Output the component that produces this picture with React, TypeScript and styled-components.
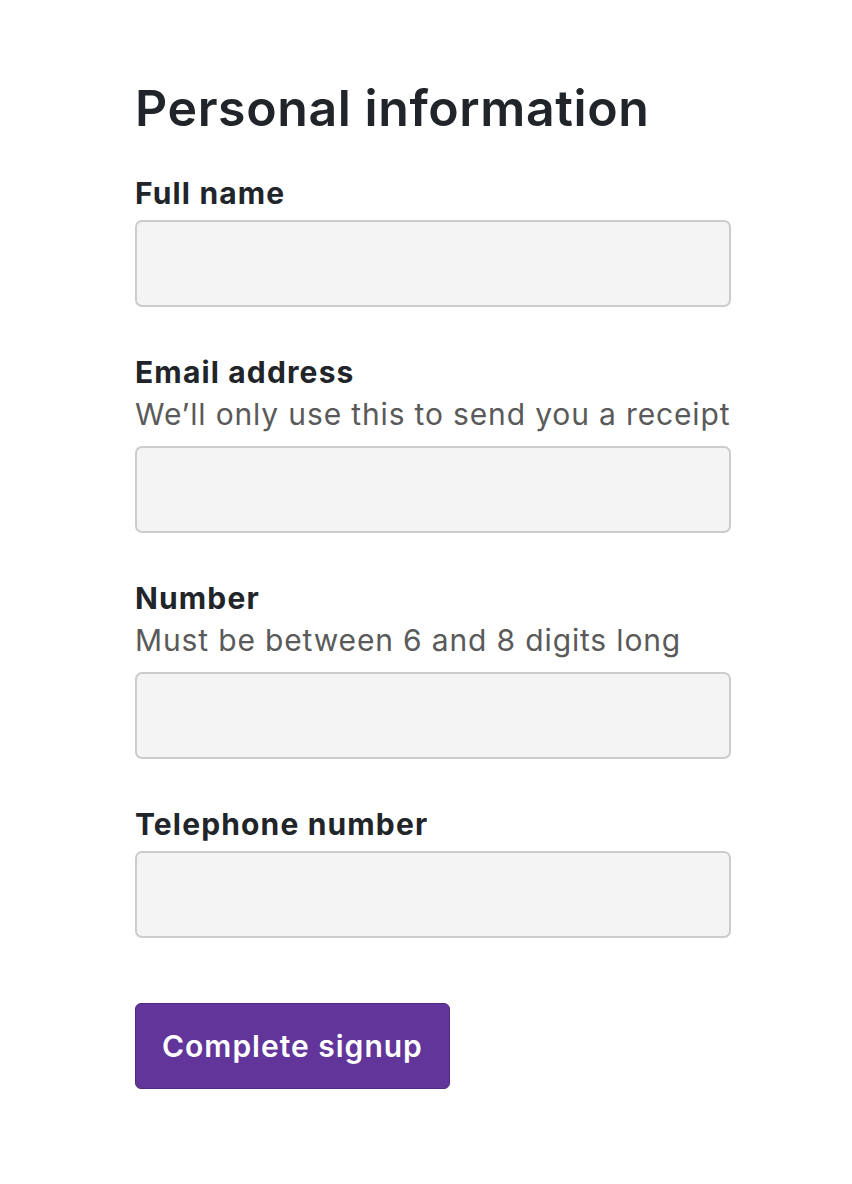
import styled, { createGlobalStyle } from "styled-components";

const GlobalStyle = createGlobalStyle`
  body {
    margin: 0;
    background: #ffffff;
    font-family: Inter, "Noto Sans", "Liberation Sans", sans-serif;
    color: #212529;
  }
`;

const Page = styled.main`
  padding: 78px 0 80px 135px;
`;

const Form = styled.form`
  width: 596px;
  display: flex;
  flex-direction: column;
`;

const Heading = styled.h1`
  margin: 0 0 34px;
  font-size: 50px;
  line-height: 60px;
  font-weight: 600;
  letter-spacing: 0.6px;
  color: #212529;
`;

const Field = styled.div`
  display: flex;
  flex-direction: column;
  & + & {
    margin-top: 44px;
  }
`;

const Label = styled.label`
  font-size: 30px;
  line-height: 42px;
  font-weight: 700;
  letter-spacing: 1.15px;
  color: #212529;
`;

const Hint = styled.div`
  font-size: 30px;
  line-height: 42px;
  font-weight: 400;
  letter-spacing: 0.85px;
  color: #5a5a5a;
  margin-bottom: 5px;
`;

const Input = styled.input`
  box-sizing: border-box;
  margin-top: 6px;
  width: 100%;
  height: 87px;
  background: #f4f4f4;
  border: 2px solid #cccccc;
  border-radius: 7px;
  padding: 0 20px;
  font: inherit;
  font-size: 30px;
  outline: none;
`;

const Button = styled.button`
  margin-top: 65px;
  align-self: flex-start;
  box-sizing: border-box;
  height: 86px;
  padding: 0 26px;
  background: #62359a;
  border: 1px solid #4f2a80;
  border-radius: 6px;
  color: #ffffff;
  font-family: inherit;
  font-size: 30px;
  font-weight: 600;
  letter-spacing: 1px;
  cursor: pointer;
`;

type FieldProps = { id: string; label: string; hint?: string; type?: string };

const fields: FieldProps[] = [
  { id: "name", label: "Full name" },
  { id: "email", label: "Email address", hint: "We’ll only use this to send you a receipt", type: "email" },
  { id: "number", label: "Number", hint: "Must be between 6 and 8 digits long" },
  { id: "tel", label: "Telephone number", type: "tel" },
];

const App = () => {
  return (
    <Page>
      <GlobalStyle />
      <Form onSubmit={(e) => e.preventDefault()}>
        <Heading>Personal information</Heading>
        {fields.map((f) => (
          <Field key={f.id}>
            <Label htmlFor={f.id}>{f.label}</Label>
            {f.hint && <Hint>{f.hint}</Hint>}
            <Input id={f.id} type={f.type ?? "text"} />
          </Field>
        ))}
        <Button type="submit">Complete signup</Button>
      </Form>
    </Page>
  );
};

export default App;
